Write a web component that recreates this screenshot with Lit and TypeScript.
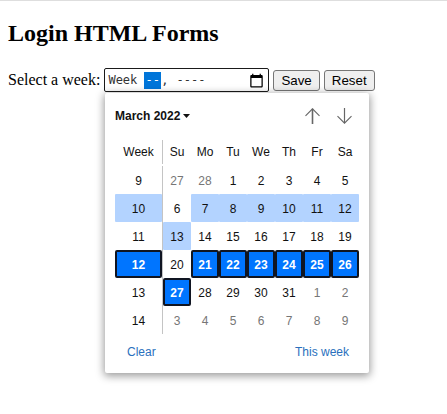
import { LitElement, html, css } from "lit";
import { customElement } from "lit/decorators.js";

const rows: { w: string; wc: string; d: [string, string][] }[] = [
  { w: "9", wc: "", d: [["27", "o"], ["28", "o"], ["1", ""], ["2", ""], ["3", ""], ["4", ""], ["5", ""]] },
  { w: "10", wc: "h", d: [["6", ""], ["7", "h"], ["8", "h"], ["9", "h"], ["10", "h"], ["11", "h"], ["12", "h"]] },
  { w: "11", wc: "", d: [["13", "h"], ["14", ""], ["15", ""], ["16", ""], ["17", ""], ["18", ""], ["19", ""]] },
  { w: "12", wc: "s", d: [["20", ""], ["21", "s"], ["22", "s"], ["23", "s"], ["24", "s"], ["25", "s"], ["26", "s"]] },
  { w: "13", wc: "", d: [["27", "s"], ["28", ""], ["29", ""], ["30", ""], ["31", ""], ["1", "o"], ["2", "o"]] },
  { w: "14", wc: "", d: [["3", "o"], ["4", "o"], ["5", "o"], ["6", "o"], ["7", "o"], ["8", "o"], ["9", "o"]] },
];
const heads = ["Su", "Mo", "Tu", "We", "Th", "Fr", "Sa"];

@customElement("app-root")
export class AppRoot extends LitElement {
  static styles = css`
    :host { display: block; font-family: "Liberation Serif", serif; color: #000; background: #fff; height: 414px; overflow: hidden; }
    .topline { height: 1px; background: #dedede; }
    h1 { margin: 0; font-size: 24px; font-weight: 700; line-height: 27px; padding: 19px 8px 0; }
    .form { position: relative; display: flex; align-items: center; padding: 21px 8px 0; font-size: 16px; line-height: 24px; }
    .label { margin-right: 4px; white-space: nowrap; }
    .input { box-sizing: border-box; width: 165px; height: 24px; border: 1px solid #1a1a1a; border-radius: 2px; display: flex; align-items: center; padding: 0 3px; font-family: "DejaVu Sans Mono", monospace; font-size: 12px; color: #333; white-space: pre; margin-right: 4px; }
    .seg { background: #0075d9; color: #fff; width: 17px; text-align: center; line-height: 17px; margin-left: 7px; }
    .txt { line-height: 16px; }
    .gap { margin-left: 8px; }
    .cal { margin-left: auto; display: block; margin-right: 1px; }
    button { box-sizing: border-box; height: 21px; font-family: "Liberation Sans", sans-serif; font-size: 13.33px; padding: 0 7px; background: #efefef; border: 1px solid #767676; border-radius: 3px; color: #000; margin-right: 4px; }
    .popup { position: absolute; left: 105px; top: 46px; width: 264px; height: 280px; box-sizing: border-box; background: #fff; border-radius: 2px; box-shadow: 0 2px 8px 1px rgba(0,0,0,.4); font-family: "Liberation Sans", sans-serif; font-size: 12px; color: #111; padding: 0 10px; display: flex; flex-direction: column; }
    .head { height: 45px; display: flex; align-items: center; font-weight: 700; }
    .month { display: flex; align-items: center; gap: 3px; }
    .arrows { margin-left: auto; display: flex; gap: 17px; margin-right: 7px; }
    .arrows svg { display: block; }
    .grid { display: grid; grid-template-columns: 47px 1px repeat(7, 28px); grid-auto-rows: 28px; }
    .c { display: flex; align-items: center; justify-content: center; box-sizing: border-box; }
    .d { padding-top: 2px; }
    .sep { background: #c4c4c4; }
    .sep.top { margin: 2px 0; }
    .o { color: #767676; }
    .h { background: #b3d3ff; border-radius: 1px; }
    .s { background: #0075ff; color: #fff; font-weight: 700; border: 2px solid #101522; border-radius: 2px; }
    .foot { display: flex; justify-content: space-between; padding: 0 10px 0 12px; margin-top: 4px; height: 28px; align-items: center; color: #2a70bd; }
  `;

  render() {
    return html`
      <div class="topline"></div>
      <h1>Login HTML Forms</h1>
      <div class="form">
        <span class="label">Select a week:</span>
        <div class="input">
          <span class="txt">Week</span><span class="seg">--</span><span class="txt">,</span><span class="txt gap">----</span>
          <svg class="cal" width="15" height="15" viewBox="0 0 24 24">
            <path fill="#000" d="M20 3h-1V1h-2v2H7V1H5v2H4c-1.1 0-2 .9-2 2v16c0 1.1.9 2 2 2h16c1.1 0 2-.9 2-2V5c0-1.1-.9-2-2-2zm0 18H4V8h16v13z"/>
          </svg>
        </div>
        <button>Save</button><button>Reset</button>
        <div class="popup">
          <div class="head">
            <div class="month">March 2022
              <svg width="7" height="4" viewBox="0 0 7 4"><path d="M0 0h7L3.5 4z" fill="#111"/></svg>
            </div>
            <div class="arrows">
              <svg width="15" height="16" viewBox="0 0 15 16"><path d="M7.5 16V.8" fill="none" stroke="#666" stroke-width="1.6"/><path d="M.5 7.8l7-7 7 7" fill="none" stroke="#666" stroke-width="1.1"/></svg>
              <svg width="15" height="16" viewBox="0 0 15 16"><path d="M7.5 0v15.2" fill="none" stroke="#666" stroke-width="1.2"/><path d="M.5 8.2l7 7 7-7" fill="none" stroke="#666" stroke-width="1.1"/></svg>
            </div>
          </div>
          <div class="grid">
            <div class="c">Week</div><div class="sep top"></div>
            ${heads.map((h) => html`<div class="c">${h}</div>`)}
            ${rows.map(
              (r) => html`
                <div class="c d ${r.wc}">${r.w}</div><div class="sep"></div>
                ${r.d.map(([t, c]) => html`<div class="c d ${c}">${t}</div>`)}
              `
            )}
          </div>
          <div class="foot"><span>Clear</span><span>This week</span></div>
        </div>
      </div>
    `;
  }
}
